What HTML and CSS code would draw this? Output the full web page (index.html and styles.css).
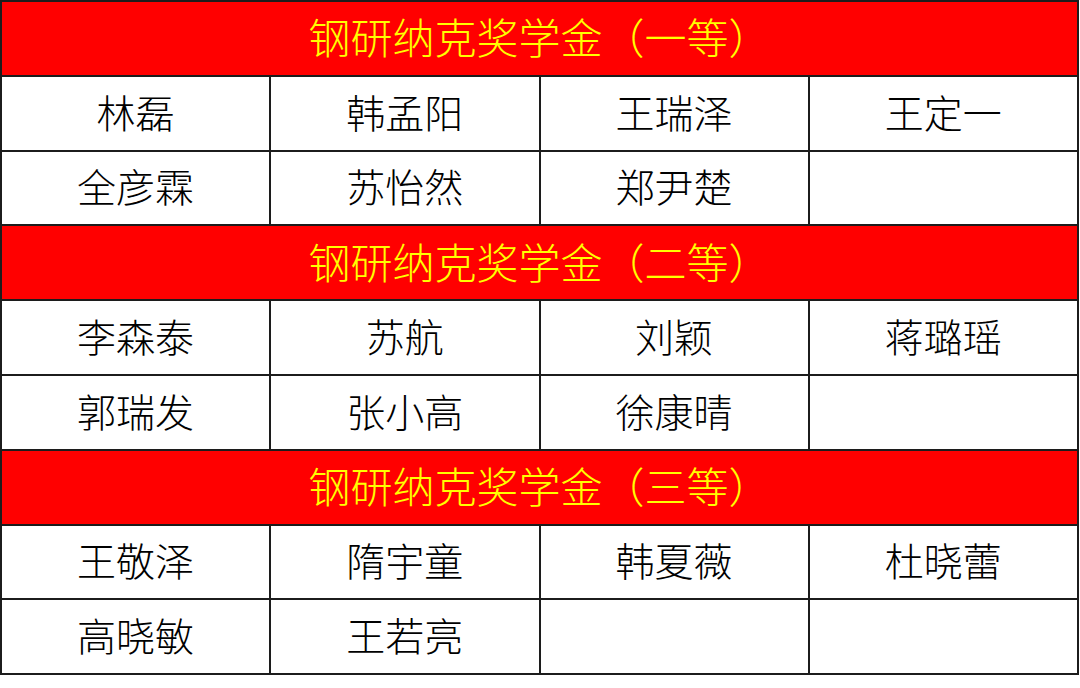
FILE: index.html
```html
<!DOCTYPE html>
<html lang="zh">
<head>
<meta charset="utf-8">
<link rel="stylesheet" href="styles.css">
</head>
<body>
<table class="awards">
  <tr class="head"><td colspan="4">钢研纳克奖学金（一等）</td></tr>
  <tr><td>林磊</td><td>韩孟阳</td><td>王瑞泽</td><td>王定一</td></tr>
  <tr><td>全彦霖</td><td>苏怡然</td><td>郑尹楚</td><td></td></tr>
  <tr class="head"><td colspan="4">钢研纳克奖学金（二等）</td></tr>
  <tr><td>李森泰</td><td>苏航</td><td>刘颖</td><td>蒋璐瑶</td></tr>
  <tr><td>郭瑞发</td><td>张小高</td><td>徐康晴</td><td></td></tr>
  <tr class="head"><td colspan="4">钢研纳克奖学金（三等）</td></tr>
  <tr><td>王敬泽</td><td>隋宇童</td><td>韩夏薇</td><td>杜晓蕾</td></tr>
  <tr><td>高晓敏</td><td>王若亮</td><td></td><td></td></tr>
</table>
</body>
</html>
```
FILE: styles.css
```css
html, body {
  margin: 0;
  padding: 0;
  background: #ffffff;
}
.awards {
  border-collapse: collapse;
  table-layout: fixed;
  width: 1079px;
  margin: 0;
  font-family: "Noto Sans CJK SC", "Liberation Serif", serif;
}
.awards td {
  width: 25%;
  height: 68.8px;
  padding: 0 0 4px 0;
  border: 2px solid #1c1c1c;
  text-align: center;
  vertical-align: middle;
  font-size: 39px;
  font-weight: 300;
  line-height: 1;
  color: #000000;
}
.awards .head td {
  background: #ff0000;
  color: #ffff00;
  font-size: 42px;
}
```
